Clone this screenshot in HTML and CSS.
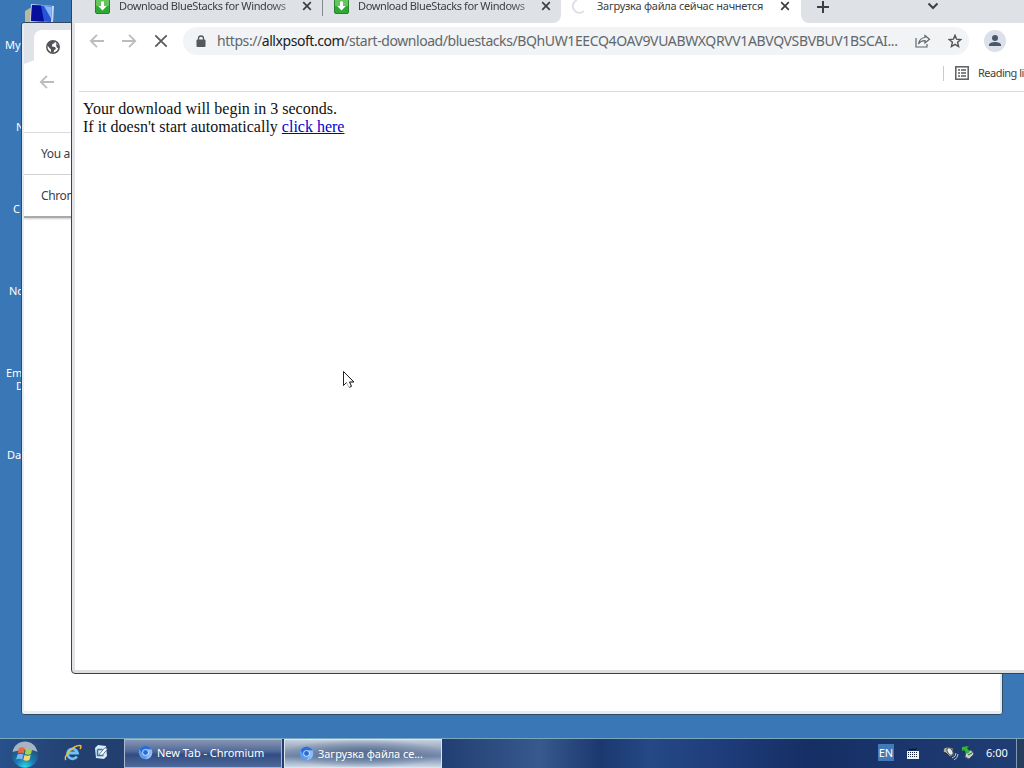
FILE: index.html
```html
<!DOCTYPE html>
<html lang="en">
<head>
    <meta charset="UTF-8">
    <title>Desktop</title>
    <link rel="stylesheet" href="styles.css">
</head>
<body>
    <svg class="symbols">
        <symbol id="download" viewBox="0 0 15 15">
            <rect x=".5" y=".5" width="14" height="14" rx="1.5" fill="#2eaa32" stroke="#27822b"/>
            <path d="M1 1h13v6H1z" fill="#64c75c"/>
            <path d="M6 2.5h3V7h2.8L7.5 11.5 3.2 7H6z" fill="#fff"/>
        </symbol>
        <symbol id="close" viewBox="0 0 10 10">
            <path d="M1.2 1.2l7.6 7.6M8.8 1.2L1.2 8.8" stroke="#3c4043" stroke-width="1.7"/>
        </symbol>
        <symbol id="back" viewBox="0 0 16 16">
            <path d="M15 8H2M8 1.8L1.8 8 8 14.2" fill="none" stroke="#babcbe" stroke-width="1.8"/>
        </symbol>
        <symbol id="chromium" viewBox="0 0 16 16">
            <circle cx="8" cy="8" r="7.2" fill="#5a9cf0"/>
            <path d="M8 4.5h6.3A7.2 7.2 0 0 1 8 15.2L11 9.8z" fill="#8dbbf8"/>
            <path d="M1.8 4.4A7.2 7.2 0 0 1 14.2 4.5H8L5 9.8z" fill="#2b6ed4"/>
            <circle cx="8" cy="8" r="3.5" fill="#cfe1fb"/>
            <circle cx="8" cy="8" r="2.6" fill="#2d6bd0"/>
        </symbol>
    </svg>

    <div class="desktop">
        <svg class="computer-icon" width="32" height="26" viewBox="0 0 32 26">
            <path d="M1 10l5-3 2 1v17H1z" fill="#b9b79c"/>
            <path d="M7 3l23 2-1 17-23-1z" fill="#c6d6ef"/>
            <path d="M8 4l20 1-1 16-20-1z" fill="#2554d8"/>
            <path d="M8 4l9 .5 3 16-13-.5z" fill="#06109c"/>
            <path d="M20 5l8 .5-1 12z" fill="#87b4f6"/>
        </svg>
        <div class="shortcuts">
            <span class="shortcut my">My</span>
            <span class="shortcut network">N</span>
            <span class="shortcut chrome">C</span>
            <span class="shortcut note">No</span>
            <span class="shortcut empty">Em<br><i>D</i></span>
            <span class="shortcut data">Da</span>
        </div>
    </div>

    <div class="window window-back">
        <div class="back-tabs">
            <div class="back-tab">
                <svg width="14" height="14" viewBox="0 0 14 14">
                    <circle cx="7" cy="7" r="6.2" fill="#fff" stroke="#505356" stroke-width="1.5"/>
                    <path d="M1 5l4-4 4 .2L8.5 3 6.2 4.2 6 6.5l3 .5 1 2-1.8 1-.8 3L5 12V9.5L3.5 8z" fill="#505356"/>
                    <path d="M10 3l3 3v3l-2.5-2z" fill="#505356"/>
                </svg>
            </div>
        </div>
        <div class="back-toolbar"><svg width="16" height="16"><use href="#back"/></svg></div>
        <div class="infobar">You a</div>
        <div class="infobar infobar-last">Chrom</div>
    </div>

    <div class="window window-front">
        <div class="tabs">
            <div class="tab tab-first">
                <svg width="15" height="15"><use href="#download"/></svg>
                <span class="tab-title title-fade">Download BlueStacks for Windows</span>
                <svg class="tab-close" width="10" height="10"><use href="#close"/></svg>
            </div>
            <div class="tab tab-second">
                <svg width="15" height="15"><use href="#download"/></svg>
                <span class="tab-title title-fade">Download BlueStacks for Windows</span>
                <svg class="tab-close" width="10" height="10"><use href="#close"/></svg>
            </div>
            <div class="tab tab-active">
                <svg width="15" height="15" viewBox="0 0 15 15"><path d="M5 1A6.7 6.7 0 1 0 12 12.2" fill="none" stroke="#dcdfe6" stroke-width="1.8"/></svg>
                <span class="tab-title title-ru">Загрузка файла сейчас начнется</span>
                <svg class="tab-close" width="10" height="10"><use href="#close"/></svg>
            </div>
            <div class="tab-tools">
                <svg width="14" height="14" viewBox="0 0 14 14"><path d="M7 1v12M1 7h12" stroke="#3c4043" stroke-width="2"/></svg>
                <svg width="12" height="12" viewBox="0 0 12 12"><path d="M1.5 3.5L6 8l4.500-4.500" fill="none" stroke="#3c4043" stroke-width="2"/></svg>
            </div>
        </div>
        <div class="toolbar">
            <svg width="16" height="16"><use href="#back"/></svg>
            <svg class="forward" width="16" height="16"><use href="#back"/></svg>
            <svg width="14" height="14" viewBox="0 0 14 14"><path d="M1.300 1.300l11.400 11.400M12.700 1.300L1.300 12.700" stroke="#55585c" stroke-width="1.700"/></svg>
            <div class="omnibox">
                <svg width="10" height="13" viewBox="0 0 10 13"><path d="M2.500 6V3.500a2.500 2.500 0 0 1 5 0V6" fill="none" stroke="#55585c" stroke-width="1.300"/><rect x=".5" y="4.500" width="9" height="7.500" rx="1" fill="#55585c"/></svg>
                <span class="url">https://<b>allxpsoft.com</b>/start-download/bluestacks/<span class="hash">BQhUW1EECQ4OAV9VUABWXQRVV1ABVQVSBVBUV1BSCAI...</span></span>
                <svg class="share" width="16" height="14" viewBox="0 0 16 14"><path d="M1 4v9h11v-3M10 1.500l4.500 3.700L10 9V6.700C7 6.700 5 7.500 3.500 10 4 6.500 6 4 10 3.500z" fill="none" stroke="#62666a" stroke-width="1.200"/></svg>
                <svg class="star" width="14" height="14" viewBox="0 0 14 14"><path d="M7 1.300l1.600 3.900 4.200.4-3.200 2.700 1 4.200L7 10.300l-3.600 2.200 1-4.200L1.200 5.600l4.200-.4z" fill="none" stroke="#505458" stroke-width="1.400"/></svg>
            </div>
            <div class="avatar"><svg width="14" height="14" viewBox="0 0 14 14"><circle cx="7" cy="4" r="3" fill="#4b5768"/><path d="M1 12V11c0-4 12-4 12 0v1z" fill="#4b5768"/></svg></div>
        </div>
        <div class="bookmarks">
            <svg width="14" height="14" viewBox="0 0 14 14"><rect x=".8" y=".8" width="12.400" height="12.400" fill="none" stroke="#5a5e62" stroke-width="1.500"/><path d="M3 4h2M3 7h2M3 10h2M6 4h5M6 7h5M6 10h5" stroke="#5a5e62" stroke-width="1.400"/></svg>
            <span>Reading li</span>
        </div>
        <div class="page">
            <span class="line-one">Your download will begin in 3 seconds.</span><br>
            <span class="line-two">If it doesn't start automatically <a href="#">click here</a></span>
        </div>
    </div>

    <svg class="cursor" width="14" height="20" viewBox="0 0 14 20"><path d="M1.500 1.500v14l3-3 2.500 5 2.500-1.200-2-4.300h4z" fill="#fff" stroke="#bbb"/><path d="M4.500 12.500l-3 3v-14l10.500 10.500h-4.500l2 4.300-2 1" fill="none" stroke="#222"/></svg>

    <div class="taskbar">
        <svg class="start" width="28" height="28" viewBox="0 0 28 28">
            <defs><radialGradient id="orb" cx=".5" cy="1" r=".9"><stop offset="0" stop-color="#38dbe8"/><stop offset=".4" stop-color="#177db6"/><stop offset="1" stop-color="#294364"/></radialGradient></defs>
            <circle cx="14" cy="14.500" r="13.200" fill="url(#orb)"/>
            <path d="M1.500 12C3 5 8 1.500 14 1.500S25 5 26.500 12C20 8 8 10 1.500 12z" fill="#a6b4c4"/>
            <path d="M8 8c2-1 4-1 6 0l-1.300 5.500c-2-1-4-1-6 0z" fill="#ed6840"/>
            <path d="M15 8.500c2 1 4 1 6.300 0L20 14c-2 1-4 1-6.200 0z" fill="#a3d34d"/>
            <path d="M6.500 14.500c2-1 4-1 6 0l-1.300 5c-2-1-4-1-6 0z" fill="#78b7f1"/>
            <path d="M13.500 15c2 1 4 1 6.200 0l-1.300 5c-2 1-4 1-6.100 0z" fill="#fbd765"/>
        </svg>
        <svg class="ie" width="18" height="18" viewBox="0 0 18 18"><path d="M12.800 12.500A5 5 0 1 1 13.500 9H5" fill="none" stroke="#6fc3f4" stroke-width="2.800"/><path d="M2 16C-1 13 9 1 16 1.500c1.500.3 1 2 0 3.500" fill="none" stroke="#edbd42" stroke-width="1.500"/></svg>
        <svg class="show-desktop" width="15" height="16" viewBox="0 0 15 16"><path d="M1 4l3-3 8 1 1 10-3 3-8-1z" fill="#d8ecf9"/><path d="M3.500 5.500h5M3.500 5.500v6h6" fill="none" stroke="#39729f" stroke-width="1.500"/><path d="M6 9.500l5-6 2.500 1.500-5 6-3 .8z" fill="#fff" stroke="#34577c" stroke-width=".8"/></svg>
        <div class="task"><svg width="15" height="15"><use href="#chromium"/></svg><span>New Tab - Chromium</span></div>
        <div class="task task-active"><svg width="15" height="15"><use href="#chromium"/></svg><span>Загрузка файла се...</span></div>
        <div class="tray">
            <span class="lang">EN</span>
            <svg class="keyboard" width="14" height="14" viewBox="0 0 14 14"><path d="M3 2l2 1 2-1 2 1 2-2" fill="none" stroke="#070d18"/><rect x="1" y="4" width="12" height="8" fill="#f1f3f5"/><path d="M2 5.500h10M2 7.500h10M2 9.500h10" stroke="#15233d" stroke-dasharray="1 1"/></svg>
            <svg class="speaker" width="17" height="16" viewBox="0 0 17 16"><path d="M2 3l3-1 6 1 1 7-4 2-4-4-3-1z" fill="#abb2b0" stroke="#30383c"/><ellipse cx="8" cy="6.500" rx="2.500" ry="4" transform="rotate(-30 8 6.500)" fill="#e6e9e5" stroke="#505759"/><path d="M10 13q4-1 4-5M12 15q4-2 4-6" fill="none" stroke="#b6cae0"/></svg>
            <svg class="usb" width="14" height="15" viewBox="0 0 14 15"><path d="M5 7l5-2 3 4-5 5-4-2z" fill="#c5d3cf" stroke="#485958"/><path d="M1 2l7-1-2 2 3 4-3 2-3-4-2 1z" fill="#35b632"/><path d="M7 10l4-2" stroke="#35454a"/></svg>
            <span class="clock">6:00</span>
            <div class="peek"></div>
        </div>
    </div>
</body>
</html>
```
FILE: styles.css
```css
* {
    box-sizing: border-box;
}
body {
    margin: 0;
    position: relative;
    width: 1024px;
    height: 768px;
    overflow: hidden;
    background-color: #3a77b7;
    font-family: "Noto Sans", "Liberation Sans", sans-serif;
    font-size: 11px;
    color: #3c4043;
}
svg {
    display: block;
    flex: none;
}
.symbols {
    position: absolute;
    width: 0;
    height: 0;
}
.computer-icon {
    position: absolute;
    left: 24px;
    top: 1px;
}
.shortcuts {
    display: grid;
    grid-auto-rows: 82px;
    width: 40px;
    padding-top: 38px;
    color: #fff;
    line-height: 13px;
    white-space: nowrap;
}
.shortcut i {
    font-style: normal;
    padding-left: 10px;
}
.my { padding-left: 5px; }
.network { padding-left: 16px; }
.chrome { padding-left: 13px; }
.note { padding-left: 9px; }
.empty { padding-left: 6px; }
.data { padding-left: 7px; }

.window {
    position: absolute;
    background-color: #fff;
    overflow: hidden;
}
.window-back {
    left: 21px;
    top: 22px;
    width: 982px;
    height: 693px;
    border: 1px solid #34495f;
    border-radius: 3px;
    box-shadow: inset 2px -3px 0 #e3edf5, inset -2px 0 0 #dcecf7;
}
.back-tabs {
    height: 42px;
    padding: 7px 0 0 10px;
    margin-left: 2px;
    background: linear-gradient(160deg, #dfe2e7 38px, #fff 39px) 0 0 / 10px 42px no-repeat, linear-gradient(#dfe2e7 33px, #fff 33px);
}
.back-tab {
    display: flex;
    height: 35px;
    padding: 10px 0 0 12px;
    border-radius: 8px 0 0 0;
    background-color: #fff;
}
.back-toolbar {
    display: flex;
    height: 68px;
    padding: 9px 0 0 15px;
    margin-left: 2px;
    border-bottom: 1px solid #dadce0;
}
.infobar {
    height: 42px;
    margin-left: 2px;
    padding-left: 17px;
    border-bottom: 1px solid #d0d1d3;
    font-size: 12px;
    letter-spacing: -0.4px;
    line-height: 41px;
}
.infobar-last {
    height: 43px;
    border-bottom: 2px solid #aaa;
    box-shadow: 0 1px 2px #ccc;
}

.window-front {
    left: 71px;
    top: -10px;
    width: 970px;
    height: 684px;
    padding: 9px 0 0 4px;
    border: 1px solid #3d4146;
    border-radius: 4px;
    background: linear-gradient(90deg, #e1e3e7 3px, #fff 3px);
    box-shadow: inset 0 -3px 0 #dcdddd;
}
.tabs {
    display: flex;
    height: 23px;
    margin-left: -4px;
    background: linear-gradient(90deg, #dee1e6 400px, #fff 400px);
}
.tab {
    display: flex;
    height: 23px;
    line-height: 14px;
}
.tab svg {
    margin-top: -1px;
}
.tab-first {
    width: 251px;
    padding-left: 23px;
    position: relative;
}
.tab-first::after {
    content: "";
    position: absolute;
    right: 0;
    top: 0;
    width: 1px;
    height: 16px;
    background-color: #85898d;
}
.tab-second {
    width: 238px;
    padding-left: 11px;
    border-radius: 0 0 8px 0;
    background-color: #dee1e6;
}
.tab-active {
    width: 240px;
    padding-left: 11px;
    background-color: #fff;
}
.tab-title {
    width: 178px;
    margin: -1px 0 0 9px;
    white-space: nowrap;
    letter-spacing: -0.38px;
}
.title-fade {
    -webkit-mask-image: linear-gradient(90deg, #000 150px, rgba(0, 0, 0, 0.6) 168px);
    mask-image: linear-gradient(90deg, #000 150px, rgba(0, 0, 0, 0.6) 168px);
}
.title-ru {
    margin-left: 10px;
    letter-spacing: -0.25px;
}
.tab .tab-close {
    margin: 1px 0 0 5px;
}
.tab-tools {
    flex: 1;
    display: flex;
    gap: 97px;
    padding-left: 15px;
    background-color: #dee1e6;
    border-radius: 0 0 0 8px;
}
.toolbar {
    display: flex;
    align-items: center;
    height: 36px;
    padding-left: 13px;
}
.forward {
    margin: 0 17px 0 16px;
    transform: scaleX(-1);
}
.omnibox {
    display: flex;
    align-items: center;
    width: 786px;
    height: 28px;
    margin-left: 15px;
    padding-left: 13px;
    border-radius: 14px;
    background-color: #f1f3f4;
}
.url {
    width: 698px;
    margin: -1px 0 0 11px;
    color: #62676c;
    font-size: 14px;
    letter-spacing: -0.44px;
    white-space: nowrap;
}
.url b {
    font-weight: normal;
    color: #202124;
}
.hash {
    letter-spacing: -0.37px;
}
.star {
    margin-left: 17px;
}
.avatar {
    display: flex;
    align-items: center;
    justify-content: center;
    width: 22px;
    height: 22px;
    margin-left: 15px;
    border-radius: 50%;
    background-color: #dbe0eb;
}
.bookmarks {
    display: flex;
    align-items: center;
    height: 33px;
    margin-left: 3px;
    padding: 0 0 5px 876px;
    border-bottom: 1px solid #d8dadd;
    white-space: nowrap;
    background: linear-gradient(#c7cacf, #c7cacf) 864px 7px / 1px 15px no-repeat;
}
.bookmarks span {
    margin-left: 9px;
    letter-spacing: -0.5px;
}
.page {
    padding: 8px 7px;
    color: #111;
    font-family: "Liberation Serif", serif;
    font-size: 16px;
    line-height: 18px;
}
.page a {
    color: #0000d0;
}
.cursor {
    position: absolute;
    left: 342px;
    top: 370px;
}

.taskbar {
    position: absolute;
    left: 0;
    top: 738px;
    width: 1024px;
    height: 30px;
    display: flex;
    border-top: 1px solid #79a7bf;
    background: linear-gradient(90deg, #28508a, #233f6f 80px, #213e72 440px, #37598d 540px, #1c3870 600px, #244985 650px, #1e3b79 730px, #152f64 810px, #203e75);
    color: #fff;
}
.start {
    margin: 1px 0 0 11px;
}
.ie {
    margin: 5px 0 0 25px;
}
.show-desktop {
    margin: 5px 0 0 12px;
}
.task {
    display: flex;
    align-items: center;
    width: 158px;
    height: 29px;
    margin-left: 15px;
    padding: 0 0 2px 13px;
    border: 1px solid #a9b8d0;
    background: linear-gradient(#8795b3, #536b99 40%, #304d83 55%, #50699a);
}
.task span {
    margin-left: 4px;
    white-space: nowrap;
    letter-spacing: -0.05px;
}
.task-active {
    margin-left: 2px;
    padding: 0 0 0 14px;
    border-color: #dce4ed;
    background: radial-gradient(ellipse at center, #5a7194 10%, transparent 75%), linear-gradient(#c5cedb, #8495b2 45%, #7186aa 60%, #cbd7e4);
}
.tray {
    flex: 1;
    display: flex;
    padding-left: 436px;
}
.lang {
    width: 16px;
    height: 17px;
    margin-top: 5px;
    background-color: #4279b7;
    text-align: center;
    line-height: 17px;
}
.keyboard {
    margin: 8px 0 0 12px;
}
.speaker {
    margin: 6px 0 0 22px;
}
.usb {
    margin: 6px 0 0 2px;
}
.clock {
    margin: 6px 0 0 11px;
}
.peek {
    width: 8px;
    margin-left: auto;
    border-left: 1px solid #8197b2;
    background-color: #263d5b;
}
```
